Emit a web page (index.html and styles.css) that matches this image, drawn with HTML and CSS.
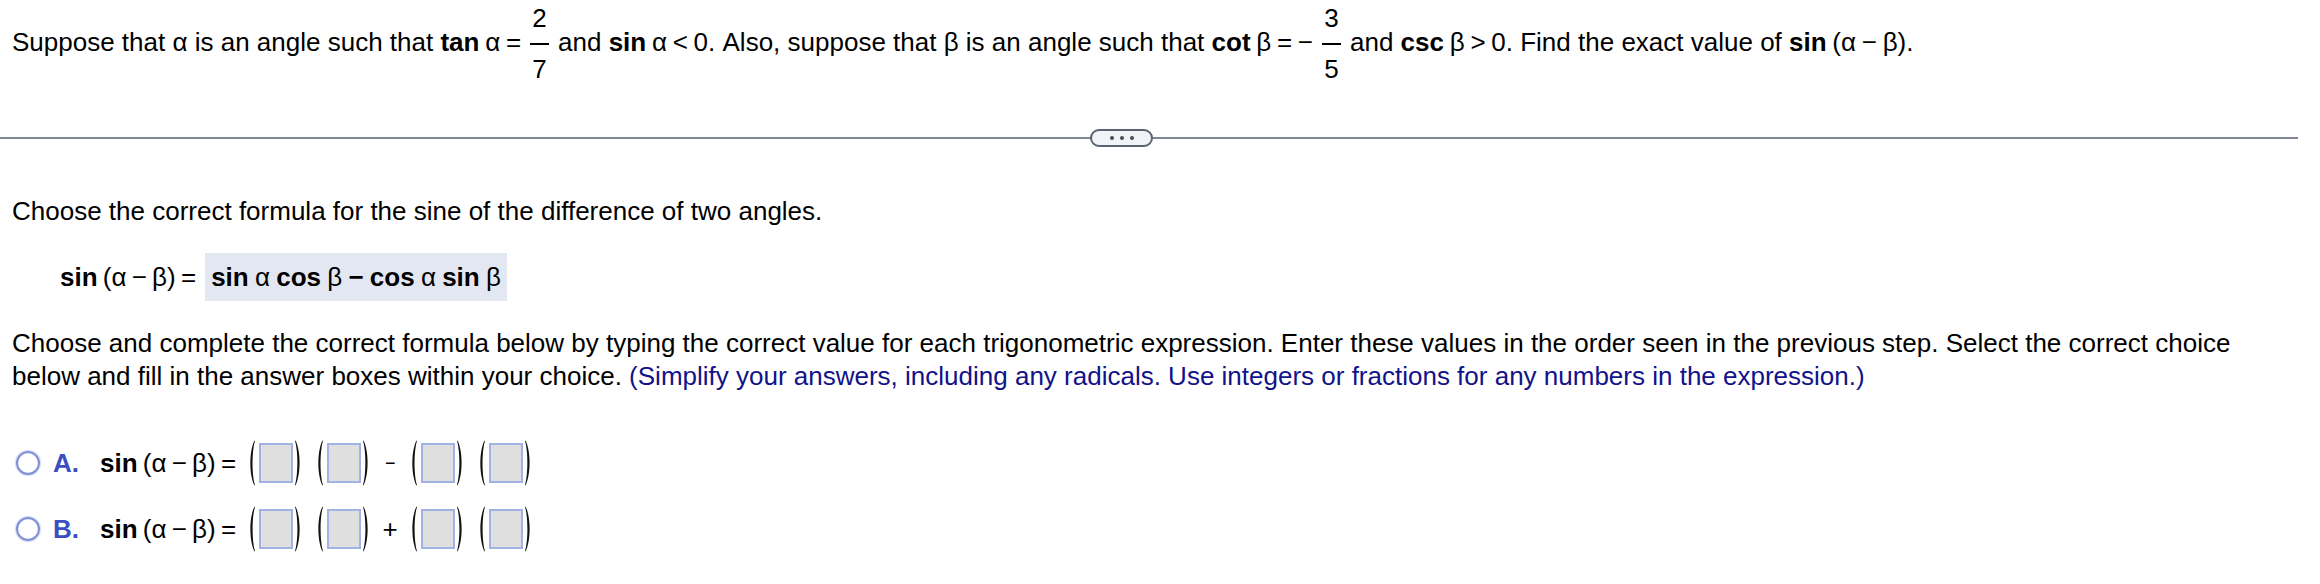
FILE: index.html
```
<!DOCTYPE html>
<html>
<head>
<meta charset="utf-8">
<link rel="stylesheet" href="styles.css">
</head>
<body>
<div class="page">
  <p class="question">Suppose that α is an angle such that <span class="m"><b>tan</b> α =</span> <span class="frac"><span class="num">2</span><span class="den">7</span></span> and <span class="m"><b>sin</b> α &lt; 0</span>. Also, suppose that β is an angle such that <span class="m"><b>cot</b> β = −</span> <span class="frac"><span class="num">3</span><span class="den">5</span></span> and <span class="m"><b>csc</b> β &gt; 0</span>. Find the exact value of <span class="m"><b>sin</b> (α − β)</span>.</p>
</div>
<div class="divider"><span class="pill"><i></i><i></i><i></i></span></div>
<div class="page">
  <p class="step">Choose the correct formula for the sine of the difference of two angles.</p>
  <div class="formula"><span class="lhs"><b>sin</b> (α − β) =</span><span class="answer"><b>sin</b> α <b>cos</b> β <b>−</b> <b>cos</b> α <b>sin</b> β</span></div>
  <p class="instr">Choose and complete the correct formula below by typing the correct value for each trigonometric expression. Enter these values in the order seen in the previous step. Select the correct choice below and fill in the answer boxes within your choice. <span class="hint">(Simplify your answers, including any radicals. Use integers or fractions for any numbers in the expression.)</span></p>
  <div class="choices">
    <div class="choice">
      <span class="radio"></span><span class="label">A.</span>
      <span class="expr"><b>sin</b> (α − β) =</span>
      <span class="group"><svg class="paren" viewBox="0 0 7 46"><path d="M6.5 0.5 C1 11 1 35 6.5 45.5 L7 45 C3.8 35 3.8 11 7 1 Z"/></svg><span class="box"></span><svg class="paren flip" viewBox="0 0 7 46"><path d="M6.5 0.5 C1 11 1 35 6.5 45.5 L7 45 C3.8 35 3.8 11 7 1 Z"/></svg></span>
      <span class="group"><svg class="paren" viewBox="0 0 7 46"><path d="M6.5 0.5 C1 11 1 35 6.5 45.5 L7 45 C3.8 35 3.8 11 7 1 Z"/></svg><span class="box"></span><svg class="paren flip" viewBox="0 0 7 46"><path d="M6.5 0.5 C1 11 1 35 6.5 45.5 L7 45 C3.8 35 3.8 11 7 1 Z"/></svg></span>
      <span class="op minus">−</span>
      <span class="group"><svg class="paren" viewBox="0 0 7 46"><path d="M6.5 0.5 C1 11 1 35 6.5 45.5 L7 45 C3.8 35 3.8 11 7 1 Z"/></svg><span class="box"></span><svg class="paren flip" viewBox="0 0 7 46"><path d="M6.5 0.5 C1 11 1 35 6.5 45.5 L7 45 C3.8 35 3.8 11 7 1 Z"/></svg></span>
      <span class="group"><svg class="paren" viewBox="0 0 7 46"><path d="M6.5 0.5 C1 11 1 35 6.5 45.5 L7 45 C3.8 35 3.8 11 7 1 Z"/></svg><span class="box"></span><svg class="paren flip" viewBox="0 0 7 46"><path d="M6.5 0.5 C1 11 1 35 6.5 45.5 L7 45 C3.8 35 3.8 11 7 1 Z"/></svg></span>
    </div>
    <div class="choice">
      <span class="radio"></span><span class="label">B.</span>
      <span class="expr"><b>sin</b> (α − β) =</span>
      <span class="group"><svg class="paren" viewBox="0 0 7 46"><path d="M6.5 0.5 C1 11 1 35 6.5 45.5 L7 45 C3.8 35 3.8 11 7 1 Z"/></svg><span class="box"></span><svg class="paren flip" viewBox="0 0 7 46"><path d="M6.5 0.5 C1 11 1 35 6.5 45.5 L7 45 C3.8 35 3.8 11 7 1 Z"/></svg></span>
      <span class="group"><svg class="paren" viewBox="0 0 7 46"><path d="M6.5 0.5 C1 11 1 35 6.5 45.5 L7 45 C3.8 35 3.8 11 7 1 Z"/></svg><span class="box"></span><svg class="paren flip" viewBox="0 0 7 46"><path d="M6.5 0.5 C1 11 1 35 6.5 45.5 L7 45 C3.8 35 3.8 11 7 1 Z"/></svg></span>
      <span class="op">+</span>
      <span class="group"><svg class="paren" viewBox="0 0 7 46"><path d="M6.5 0.5 C1 11 1 35 6.5 45.5 L7 45 C3.8 35 3.8 11 7 1 Z"/></svg><span class="box"></span><svg class="paren flip" viewBox="0 0 7 46"><path d="M6.5 0.5 C1 11 1 35 6.5 45.5 L7 45 C3.8 35 3.8 11 7 1 Z"/></svg></span>
      <span class="group"><svg class="paren" viewBox="0 0 7 46"><path d="M6.5 0.5 C1 11 1 35 6.5 45.5 L7 45 C3.8 35 3.8 11 7 1 Z"/></svg><span class="box"></span><svg class="paren flip" viewBox="0 0 7 46"><path d="M6.5 0.5 C1 11 1 35 6.5 45.5 L7 45 C3.8 35 3.8 11 7 1 Z"/></svg></span>
    </div>
  </div>
</div>
</body>
</html>
```

FILE: styles.css
```
html, body {
  margin: 0;
  padding: 0;
  background: #fff;
}
body {
  font-family: "Liberation Sans", Arial, sans-serif;
  font-size: 26px;
  color: #000;
}
.page {
  padding: 0 22px 0 12px;
}
.question {
  margin: 0;
  padding-top: 5px;
  line-height: 33px;
}
.m {
  word-spacing: -1.5px;
}
.frac {
  display: inline-flex;
  flex-direction: column;
  align-items: center;
  vertical-align: middle;
  line-height: 27px;
  margin: 0 2px;
}
.frac .num {
  padding: 0 2px 11px;
  border-bottom: 2px solid #000;
}
.frac .den {
  padding-top: 11px;
}
.divider {
  margin-top: 54px;
  margin-right: 22px;
  height: 2px;
  background: #7f8796;
  display: flex;
  align-items: center;
}
.pill {
  margin-left: 1090px;
  width: 63px;
  height: 18px;
  box-sizing: border-box;
  border: 2px solid #5b6372;
  border-radius: 10px;
  background: #f2f3f6;
  display: flex;
  align-items: center;
  justify-content: center;
  gap: 6px;
}
.pill i {
  width: 4px;
  height: 4px;
  border-radius: 50%;
  background: #454b57;
}
.step {
  margin: 56px 0 0;
  line-height: 33px;
}
.formula {
  margin-top: 25px;
  margin-left: 48px;
  display: flex;
  align-items: center;
  gap: 9px;
}
.lhs, .expr {
  word-spacing: -2px;
}
.answer {
  word-spacing: -1px;
  background: #e3e7f1;
  padding: 10px 6px;
  line-height: 28px;
}
.instr {
  margin: 26px 0 0;
  line-height: 33px;
}
.hint {
  color: #12128a;
}
.choices {
  margin-top: 47px;
  display: flex;
  flex-direction: column;
  gap: 20px;
}
.choice {
  display: flex;
  align-items: center;
  height: 46px;
}
.radio {
  width: 24px;
  height: 24px;
  box-sizing: border-box;
  border: 2px solid #8190d6;
  border-radius: 50%;
  margin-left: 4px;
  box-shadow: 0 0 1px 1px #d3d8f3, inset 0 0 1px #b8c0ea;
}
.label {
  font-weight: bold;
  color: #3b4fc2;
  margin-left: 13px;
  width: 47px;
}
.expr {
  margin-right: 12px;
}
.group {
  display: flex;
  align-items: center;
  margin-right: 14px;
}
.paren {
  width: 7px;
  height: 46px;
  fill: #111;
}
.paren.flip {
  transform: scaleX(-1);
}
.box {
  width: 34px;
  height: 40px;
  box-sizing: border-box;
  background: #dfdfdf;
  border: 2px solid #a3b2e4;
  margin: 0 2px 0 4px;
}
.op {
  margin: 0 12px 0 -2px;
  width: 16px;
  text-align: center;
}
.op.minus {
  font-size: 18px;
}
```
